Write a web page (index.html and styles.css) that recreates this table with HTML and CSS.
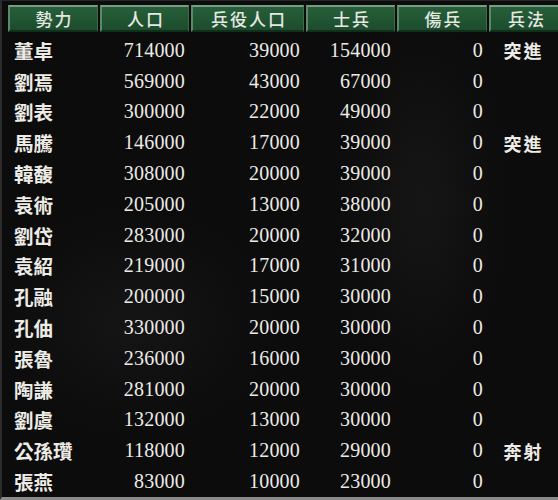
FILE: index.html
```html
<!DOCTYPE html>
<html lang="zh-Hant">
<head>
<meta charset="utf-8">
<title>勢力一覧</title>
<link rel="stylesheet" href="styles.css">
</head>
<body>
<div class="screen">
  <div class="table">
    <div class="row head">
      <div class="th">勢力</div>
      <div class="th">人口</div>
      <div class="th">兵役人口</div>
      <div class="th">士兵</div>
      <div class="th">傷兵</div>
      <div class="th">兵法</div>
    </div>
    <div class="row"><div class="name">董卓</div><div class="num">714000</div><div class="num">39000</div><div class="num">154000</div><div class="num">0</div><div class="tac">突進</div></div>
    <div class="row"><div class="name">劉焉</div><div class="num">569000</div><div class="num">43000</div><div class="num">67000</div><div class="num">0</div><div class="tac"></div></div>
    <div class="row"><div class="name">劉表</div><div class="num">300000</div><div class="num">22000</div><div class="num">49000</div><div class="num">0</div><div class="tac"></div></div>
    <div class="row"><div class="name">馬騰</div><div class="num">146000</div><div class="num">17000</div><div class="num">39000</div><div class="num">0</div><div class="tac">突進</div></div>
    <div class="row"><div class="name">韓馥</div><div class="num">308000</div><div class="num">20000</div><div class="num">39000</div><div class="num">0</div><div class="tac"></div></div>
    <div class="row"><div class="name">袁術</div><div class="num">205000</div><div class="num">13000</div><div class="num">38000</div><div class="num">0</div><div class="tac"></div></div>
    <div class="row"><div class="name">劉岱</div><div class="num">283000</div><div class="num">20000</div><div class="num">32000</div><div class="num">0</div><div class="tac"></div></div>
    <div class="row"><div class="name">袁紹</div><div class="num">219000</div><div class="num">17000</div><div class="num">31000</div><div class="num">0</div><div class="tac"></div></div>
    <div class="row"><div class="name">孔融</div><div class="num">200000</div><div class="num">15000</div><div class="num">30000</div><div class="num">0</div><div class="tac"></div></div>
    <div class="row"><div class="name">孔伷</div><div class="num">330000</div><div class="num">20000</div><div class="num">30000</div><div class="num">0</div><div class="tac"></div></div>
    <div class="row"><div class="name">張魯</div><div class="num">236000</div><div class="num">16000</div><div class="num">30000</div><div class="num">0</div><div class="tac"></div></div>
    <div class="row"><div class="name">陶謙</div><div class="num">281000</div><div class="num">20000</div><div class="num">30000</div><div class="num">0</div><div class="tac"></div></div>
    <div class="row"><div class="name">劉虞</div><div class="num">132000</div><div class="num">13000</div><div class="num">30000</div><div class="num">0</div><div class="tac"></div></div>
    <div class="row"><div class="name">公孫瓚</div><div class="num">118000</div><div class="num">12000</div><div class="num">29000</div><div class="num">0</div><div class="tac">奔射</div></div>
    <div class="row"><div class="name">張燕</div><div class="num">83000</div><div class="num">10000</div><div class="num">23000</div><div class="num">0</div><div class="tac"></div></div>
  </div>
</div>
</body>
</html>
```

FILE: styles.css
```css
html, body {
  margin: 0;
  padding: 0;
  background: #0a0a0a;
}
body {
  width: 558px;
  height: 500px;
  overflow: hidden;
}
.screen {
  box-sizing: border-box;
  width: 558px;
  height: 500px;
  padding: 4px 0 0 6px;
  border-left: 2px solid #2c2c2c;
  border-bottom: 3px solid #8c8c8c;
  border-top: 1px solid #262626;
  background:
    radial-gradient(ellipse 120px 260px at 420px 200px, rgba(40,40,40,0.35), rgba(0,0,0,0) 70%),
    radial-gradient(ellipse 200px 160px at 130px 320px, rgba(34,34,34,0.4), rgba(0,0,0,0) 70%),
    #0c0c0c;
  overflow: hidden;
}
.table {
  display: flex;
  flex-direction: column;
}
.row {
  display: grid;
  grid-template-columns: 90px 89px 113px 89px 90px 73px;
  column-gap: 2px;
  height: 30.8px;
  align-items: center;
  color: #ecebe6;
}
.row.head {
  height: 27px;
  margin-bottom: 3px;
}
.th {
  box-sizing: border-box;
  height: 27px;
  display: flex;
  align-items: center;
  justify-content: center;
  background: linear-gradient(#275f3a, #1c4c2d);
  border-top: 2px solid #7a9c84;
  border-left: 2px solid #5f876b;
  border-right: 1px solid #3d6a4b;
  border-bottom: 2px solid #10301c;
  font-family: "Noto Sans CJK TC", "Noto Sans CJK JP", sans-serif;
  font-weight: 500;
  font-size: 17px;
  letter-spacing: 2px;
  padding-left: 2px;
  color: #e6e8e2;
}
.name {
  font-family: "Noto Sans CJK TC", "Noto Sans CJK JP", sans-serif;
  font-weight: 700;
  font-size: 19.5px;
  padding-left: 6px;
  white-space: nowrap;
}
.num {
  font-family: "Liberation Serif", "DejaVu Serif", serif;
  font-size: 20px;
  text-align: right;
  padding-right: 4px;
  letter-spacing: 0.2px;
}
.tac {
  font-family: "Noto Sans CJK TC", "Noto Sans CJK JP", sans-serif;
  font-weight: 700;
  font-size: 18px;
  text-align: center;
  letter-spacing: 2px;
  padding-right: 4px;
}
```
